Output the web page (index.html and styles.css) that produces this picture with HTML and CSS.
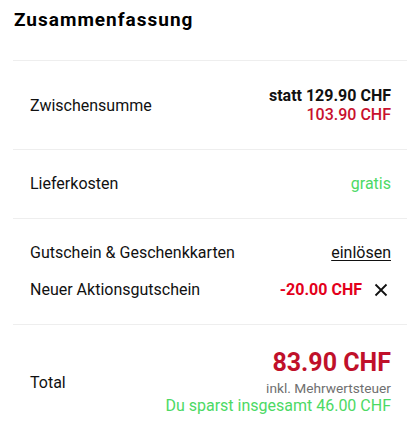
FILE: index.html
```html
<!DOCTYPE html>
<html lang="de">
<head>
<meta charset="utf-8">
<link rel="stylesheet" href="styles.css">
</head>
<body>
<section class="summary">
  <h2 class="title">Zusammenfassung</h2>
  <div class="list">
    <div class="row row-sub">
      <span class="label">Zwischensumme</span>
      <div class="values">
        <span class="old">statt 129.90 CHF</span>
        <span class="price">103.90 CHF</span>
      </div>
    </div>
    <div class="row">
      <span class="label">Lieferkosten</span>
      <span class="free">gratis</span>
    </div>
    <div class="row row-voucher">
      <div class="line">
        <span class="label">Gutschein &amp; Geschenkkarten</span>
        <a class="link" href="#">einlösen</a>
      </div>
      <div class="line">
        <span class="label">Neuer Aktionsgutschein</span>
        <div class="discount">
          <span class="minus">-20.00 CHF</span>
          <svg class="close" width="14" height="14" viewBox="0 0 14 14"><path d="M1.5 1.5L12.5 12.5M12.5 1.5L1.5 12.5" stroke="#111" stroke-width="1.8" fill="none"/></svg>
        </div>
      </div>
    </div>
    <div class="row row-total">
      <span class="label">Total</span>
      <div class="values">
        <span class="total">83.90 CHF</span>
        <span class="vat">inkl. Mehrwertsteuer</span>
        <span class="save">Du sparst insgesamt 46.00 CHF</span>
      </div>
    </div>
  </div>
</section>
</body>
</html>
```
FILE: styles.css
```css
* { box-sizing: border-box; }
html, body { margin: 0; padding: 0; background: #fff; }
body {
  font-family: Roboto, "Liberation Sans", sans-serif;
  color: #111;
  width: 412px;
}
.summary {
  padding: 0 5px 0 13px;
}
.title {
  margin: 0;
  padding: 7px 0 0 1px;
  height: 60px;
  font-size: 19px;
  line-height: 26px;
  font-weight: 700;
  letter-spacing: 1px;
  color: #000;
}
.list { display: flex; flex-direction: column; }
.row {
  display: flex;
  justify-content: space-between;
  align-items: center;
  border-top: 1px solid #eeeeee;
  padding: 23px 16px 24px 17px;
  font-size: 16px;
  line-height: 21px;
}
.row-sub { padding-top: 25px; padding-bottom: 25px; }
.values {
  display: flex;
  flex-direction: column;
  align-items: flex-end;
}
.old { font-weight: 700; font-size: 16px; line-height: 19px; color: #111; }
.price { font-weight: 500; font-size: 16px; line-height: 19px; color: #c8102e; }
.free { color: #4cd964; }
.row-voucher {
  flex-direction: column;
  align-items: stretch;
  gap: 16px;
}
.line { display: flex; justify-content: space-between; align-items: center; }
.link { color: #111; text-decoration: underline; text-underline-offset: 2px; }
.discount { display: flex; align-items: center; gap: 12px; margin-right: 3px; }
.minus { color: #e3001b; font-weight: 700; }
.close { display: block; }
.row-total { padding-top: 24px; padding-bottom: 20px; }
.total { font-size: 25px; line-height: 28px; font-weight: 700; color: #c0102a; }
.vat { font-size: 13.7px; line-height: 16px; color: #6f6f6f; margin-top: 3px; }
.save { font-size: 16px; line-height: 19px; color: #4cd964; }
```
